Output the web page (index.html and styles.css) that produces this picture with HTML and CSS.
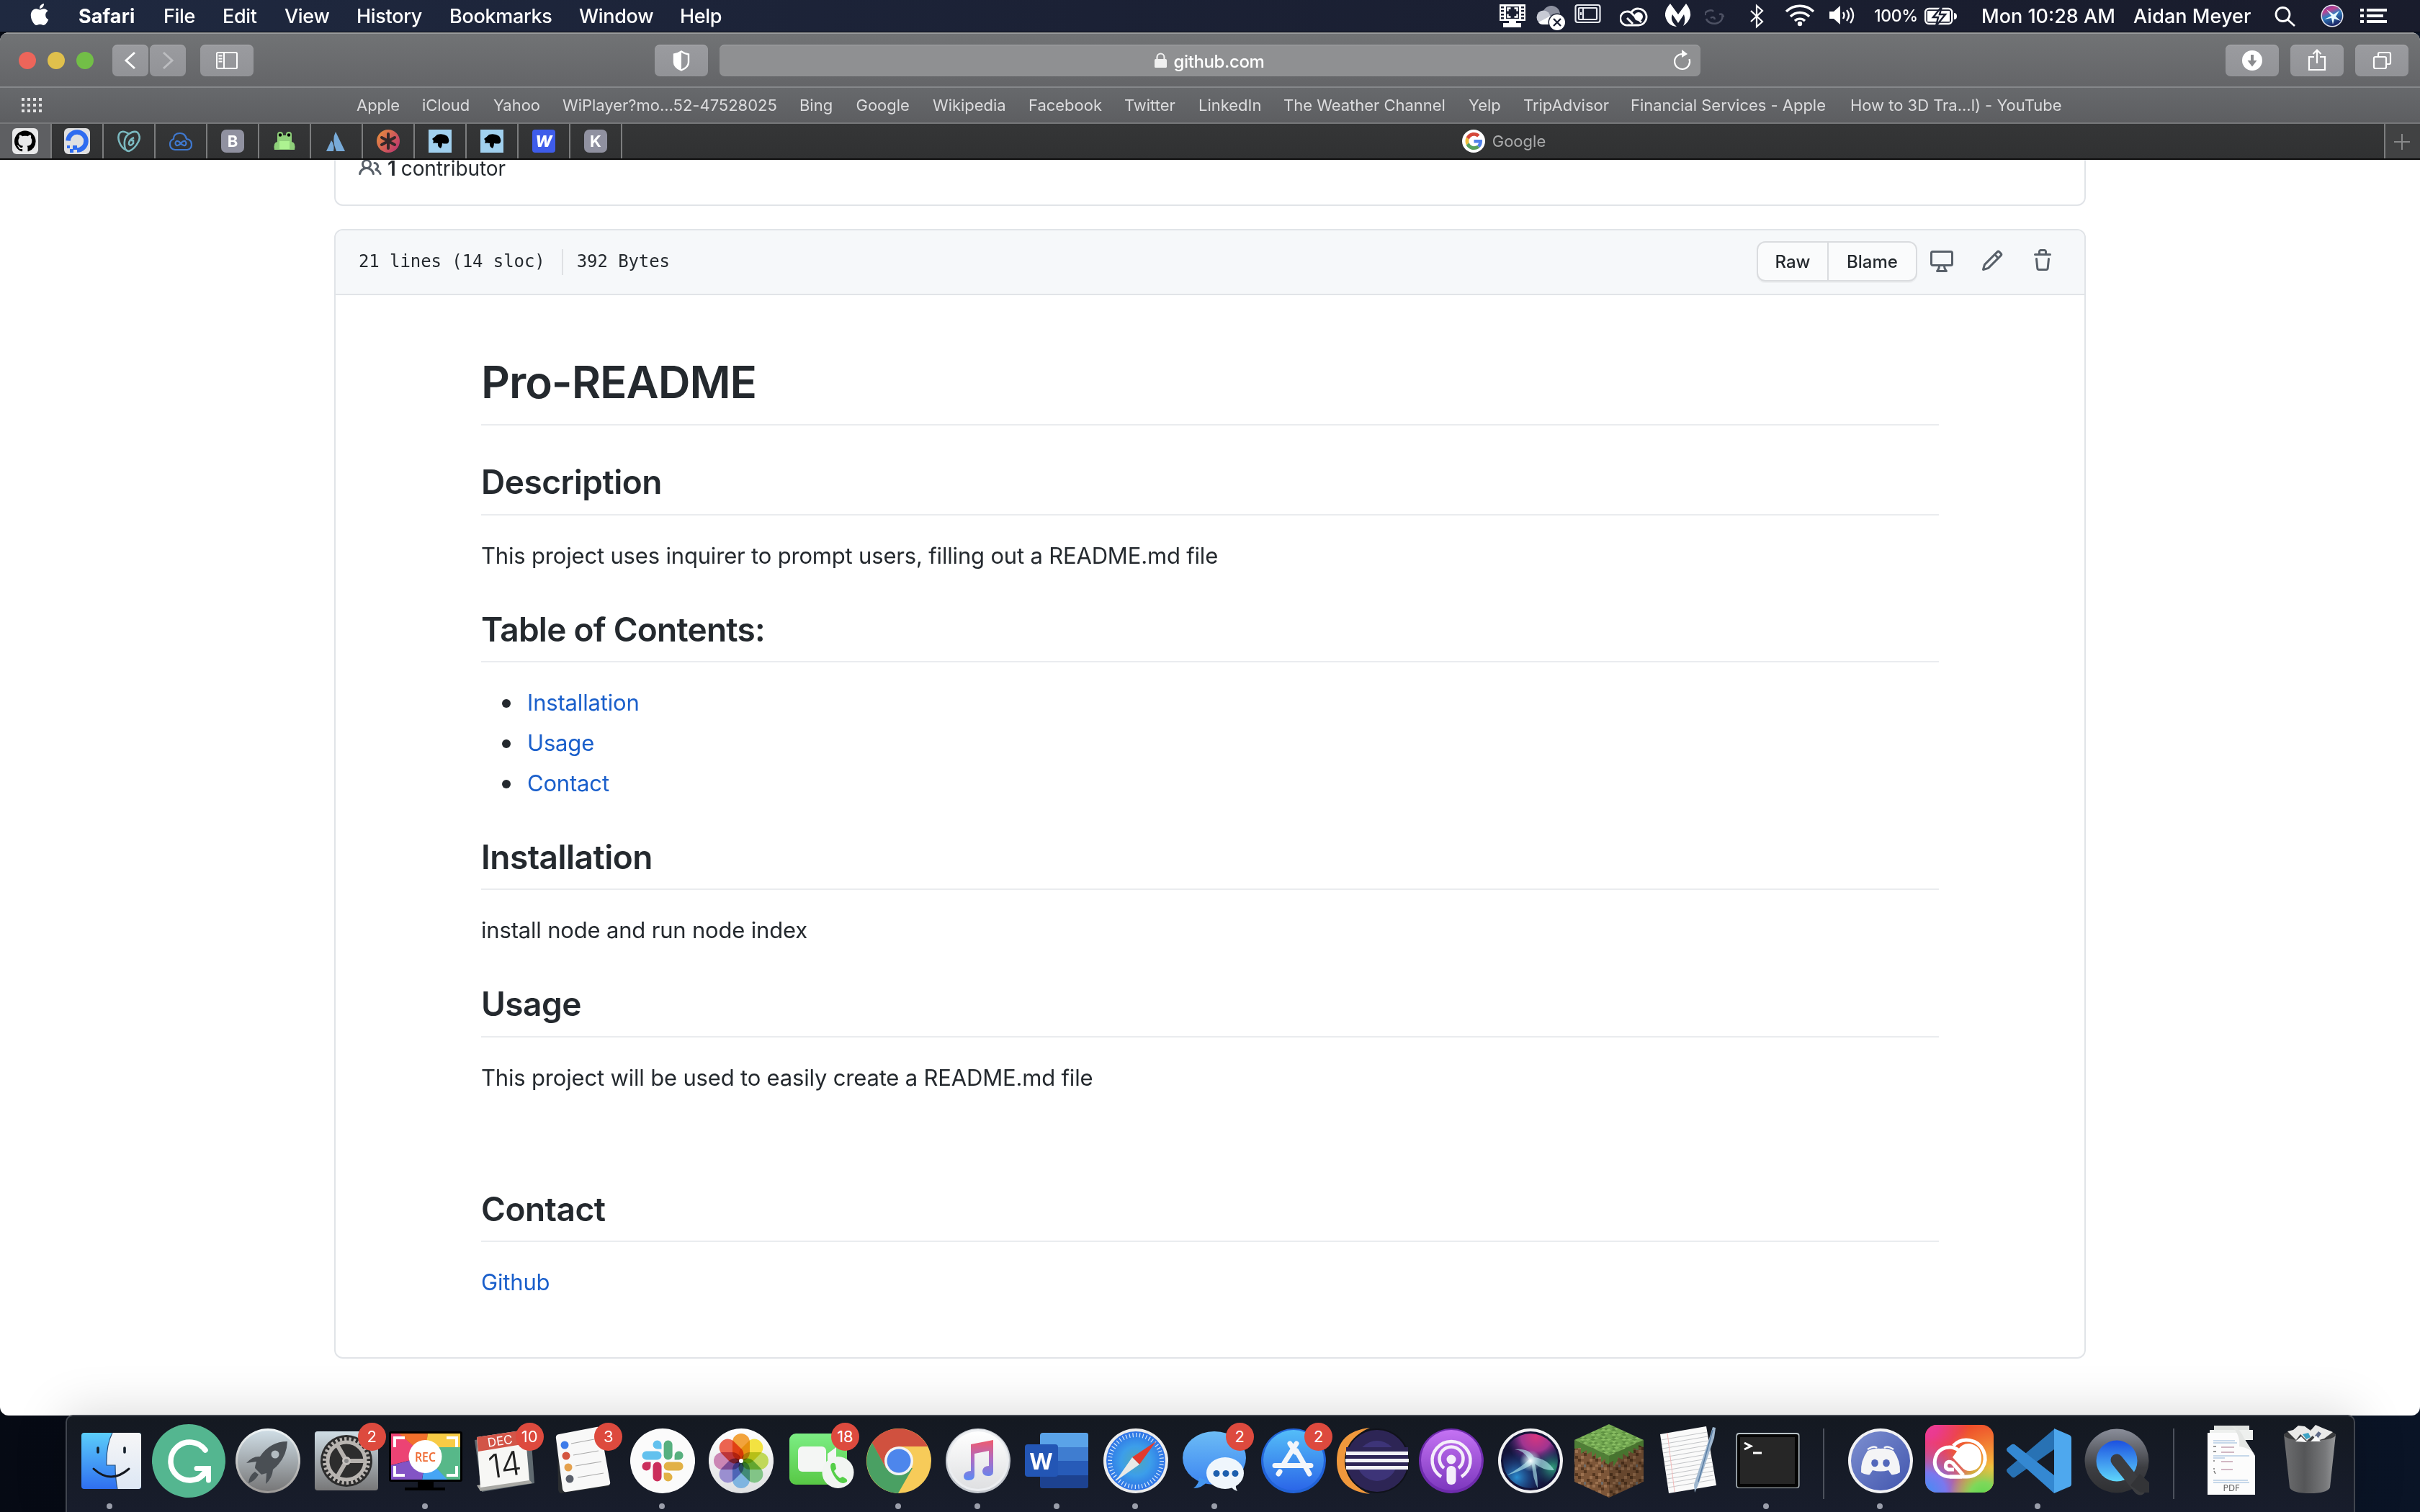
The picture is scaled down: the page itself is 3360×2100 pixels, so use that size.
FILE: index.html
```html
<!DOCTYPE html>
<html lang="en">
<head>
<meta charset="utf-8">
<title>Pro-README</title>
<link rel="stylesheet" href="styles.css">
</head>
<body>
<header class="menubar">
  <nav class="menus">
    <svg class="apple" width="30" height="30" viewBox="0 0 24 24" fill="#fff"><path d="M12.152 6.896c-.948 0-2.415-1.078-3.96-1.04-2.04.027-3.91 1.183-4.961 3.014-2.117 3.675-.546 9.103 1.519 12.09 1.013 1.454 2.208 3.09 3.792 3.039 1.52-.065 2.09-.987 3.935-.987 1.831 0 2.35.987 3.96.948 1.637-.026 2.676-1.48 3.676-2.948 1.156-1.688 1.636-3.325 1.662-3.415-.039-.013-3.182-1.221-3.22-4.857-.026-3.04 2.48-4.494 2.597-4.559-1.429-2.09-3.623-2.324-4.39-2.376-2-.156-3.675 1.09-4.61 1.09zM15.53 3.83c.843-1.012 1.4-2.427 1.245-3.83-1.207.052-2.662.805-3.532 1.818-.78.896-1.454 2.338-1.273 3.714 1.338.104 2.715-.688 3.559-1.701"/></svg>
    <b>Safari</b><span>File</span><span>Edit</span><span>View</span><span>History</span><span>Bookmarks</span><span>Window</span><span>Help</span>
  </nav>
  <div class="tray">
    <svg width="36" height="44" viewBox="0 0 36 44"><path fill="#fff" d="M0 6h36v23H23v3h7v6H5v-6h8v-3H0z"/><g fill="#1b2033"><path d="M9 9h18v17H9z"/><path d="M2 9h4v2.500H2zM2 14h4v2.500H2zM2 19h4v2.500H2zM2 24h4v2.500H2zM30 9h4v2.500h-4zM30 14h4v2.500h-4zM30 19h4v2.500h-4zM30 24h4v2.500h-4z"/></g><path d="M11.500 15.500v-4h4M20.500 11.500h4v4M24.500 19.500v4h-4M15.500 23.500h-4v-4" fill="none" stroke="#fff" stroke-width="2.400"/></svg>
    <svg width="42" height="44" viewBox="0 0 42 44"><circle cx="21" cy="20" r="12" fill="#8d91a0"/><circle cx="10" cy="24" r="9.500" fill="#c7cad4"/><path d="M3 31L20 22 28 34H9q-4 0-6-3z" fill="#fff"/><circle cx="29" cy="31" r="12.500" fill="#1b2033"/><circle cx="29" cy="31" r="11" fill="#fff"/><path d="M24 26l10 10M34 26L24 36" stroke="#1b2033" stroke-width="2.400"/></svg>
    <svg width="38" height="44" viewBox="0 0 38 44" fill="none" stroke="#e8eaf0" stroke-width="2.200"><rect x="1.500" y="7" width="34" height="24" rx="3"/><rect x="6" y="11" width="25" height="16" rx="1"/><path d="M12 11v16M9 17v4"/></svg>
    <svg width="40" height="44" viewBox="0 0 40 44" fill="none" stroke="#fff" stroke-width="2.800"><path d="M11 35h15a11.500 11.500 0 1 0-10-18"/><path d="M11 35a9.500 9.500 0 1 1 7-15l12 11"/><path d="M10 25l8 8"/><circle cx="26" cy="23" r="6" fill="#fff" stroke="none"/></svg>
    <svg width="36" height="44" viewBox="0 0 36 44"><path fill="#fff" d="M7 5l11 15L29 5q7 9 6 17-2 9-10 14 4-7 1-16l-8 12-8-12q-4 9 6 17-13-1-16-15Q-1 14 7 5z"/></svg>
    <svg width="30" height="44" viewBox="0 0 30 44" fill="none" stroke="#4d5163" stroke-width="2.500"><path d="M2 26a11 9 0 1 0 22-5M1 21q-2-4 4-6 5-2 7 1M8 25q5-3 6 2M20 20q5-2 6 4"/></svg>
    <svg width="20" height="44" viewBox="0 0 20 44" fill="none" stroke="#fff" stroke-width="2.200"><path d="M1 15l16 15-8 7V8l8 7L1 30"/></svg>
    <svg width="42" height="44" viewBox="0 0 42 44" fill="none" stroke="#fff" stroke-width="3.400"><path d="M2 16a27 27 0 0 1 38 0M8 23a18 18 0 0 1 26 0M14 29a10 10 0 0 1 14 0"/><circle cx="21" cy="33" r="1.500"/></svg>
    <svg width="36" height="44" viewBox="0 0 36 44" fill="none" stroke="#fff" stroke-width="2.400"><path fill="#fff" stroke="none" d="M0 16h6l9-8v26l-9-8H0z"/><path d="M19 17q3 4 0 9M24 14q6 7 0 15M29 11q8 10 0 21"/></svg>
    <span class="pct">100%</span>
    <svg width="48" height="44" viewBox="0 0 48 44"><rect x="1.200" y="12" width="37" height="21" rx="5" fill="none" stroke="#fff" stroke-width="2.400"/><path fill="#fff" d="M4 15h31v15H4zM41 18q4 0 4 4.500T41 27z"/><path d="M24 9L12 24h7l-3 12 13-16h-8z" fill="#fff" stroke="#1b2033" stroke-width="2.500"/></svg>
    <span class="clock">Mon 10:28 AM</span><span>Aidan Meyer</span>
    <svg width="30" height="44" viewBox="0 0 30 44" fill="none" stroke="#fff" stroke-width="2.800"><circle cx="11.500" cy="20" r="9.500"/><path d="M18 27l10 9"/></svg>
    <svg width="34" height="44" viewBox="0 0 34 44"><circle cx="16" cy="22" r="15.500" fill="#e9eaf2"/><circle cx="16" cy="22" r="14" fill="url(#siriA)"/><path d="M5 27l10-5-7-9 10 7 8-5-5 8 7 6-9-3-2 8-2-9z" fill="#e8fbff"/></svg>
    <svg width="38" height="44" viewBox="0 0 38 44" fill="#fff"><path d="M0 12h5v4H0zM9 12h28v4H9zM0 20h5v4H0zM9 20h23v4H9zM0 28h5v4H0zM9 28h28v4H9z"/></svg>
  </div>
</header>

<main class="window">
  <div class="toolbar">
    <div class="lights"><i class="red"></i><i class="yellow"></i><i class="green"></i></div>
    <div class="btn nav back"><svg width="50" height="44" viewBox="0 0 50 44" fill="none" stroke="#fff" stroke-width="3"><path d="M31 11L19 22l12 11"/></svg></div>
    <div class="btn nav"><svg width="50" height="44" viewBox="0 0 50 44" fill="none" stroke="#bcbdc0" stroke-width="3"><path d="M19 11l12 11-12 11"/></svg></div>
    <div class="btn side"><svg width="74" height="44" viewBox="0 0 74 44" fill="none" stroke="#fff" stroke-width="2"><rect x="23" y="11" width="28" height="22" rx="1.500"/><path d="M33 11v22M25.500 15.500h5M25.500 19.500h5M25.500 23.500h5"/></svg></div>
    <div class="btn shield"><svg width="74" height="44" viewBox="0 0 74 44"><path d="M37 9.500q5 3.500 10 4v11q0 7-10 11-10-4-10-11v-11q5-.5 10-4z" fill="none" stroke="#fff" stroke-width="2.400"/><path fill="#fff" d="M37 9.500q-5 3.500-10 4v11q0 7 10 11z"/></svg></div>
    <div class="url">
      <svg width="17" height="22" viewBox="0 0 17 22"><rect x="0" y="9" width="17" height="12" rx="1.500" fill="#f0f0f0"/><path d="M3.500 10V6.500a5 5 0 0 1 10 0V10" fill="none" stroke="#f0f0f0" stroke-width="2.200"/></svg>
      <span>github.com</span>
      <svg class="reload" width="26" height="30" viewBox="0 0 26 30"><path d="M22.500 13a10.500 10.500 0 1 1-9.500-7" fill="none" stroke="#fff" stroke-width="2.200"/><path d="M12 0l8 6-8 5z" fill="#fff"/></svg>
    </div>
    <div class="btn download"><svg width="74" height="44" viewBox="0 0 74 44"><circle cx="37" cy="22" r="14" fill="#fff"/><path d="M35 14h4v8h4.500L37 30.500 30.500 22H35z" fill="#8a8b8e"/></svg></div>
    <div class="btn"><svg width="74" height="44" viewBox="0 0 74 44" fill="none" stroke="#fff" stroke-width="2.200"><path d="M33 17h-7v18h22V17h-7M37 26V8M31.500 13L37 7.500l5.500 5.500"/></svg></div>
    <div class="btn"><svg width="74" height="44" viewBox="0 0 74 44" fill="none" stroke="#fff" stroke-width="2.200"><rect x="26" y="17" width="17" height="16" rx="2"/><path d="M32 16v-3q0-2 2-2h13q2 0 2 2v12q0 2-2 2h-3"/></svg></div>
  </div>

  <div class="favorites">
    <svg width="30" height="20" viewBox="0 0 30 20" fill="#e3e3e4"><path d="M0 0h4v4H0zM8 0h4v4H8zM16 0h4v4h-4zM24 0h4v4h-4zM0 8h4v4H0zM8 8h4v4H8zM16 8h4v4h-4zM24 8h4v4h-4zM0 16h4v4H0zM8 16h4v4H8zM16 16h4v4h-4zM24 16h4v4h-4z"/></svg>
    <span>Apple</span><span>iCloud</span><span>Yahoo</span><span>WiPlayer?mo...52-47528025</span><span>Bing</span><span>Google</span><span>Wikipedia</span><span>Facebook</span><span>Twitter</span><span>LinkedIn</span><span>The Weather Channel</span><span>Yelp</span><span>TripAdvisor</span><span>Financial Services - Apple</span><span>How to 3D Tra...l) - YouTube</span>
  </div>

  <div class="tabs">
    <div class="pin active"><svg width="36" height="36" viewBox="0 0 36 36"><rect width="36" height="36" rx="6" fill="#e9e9ea"/><path transform="translate(3 3.500) scale(1.850)" d="M8 0C3.580 0 0 3.580 0 8c0 3.540 2.290 6.530 5.470 7.590.4.070.55-.17.55-.38 0-.19-.01-.82-.01-1.490-2.010.37-2.530-.49-2.690-.94-.09-.23-.48-.94-.82-1.130-.28-.15-.68-.52-.01-.53.63-.01 1.080.58 1.230.82.72 1.210 1.870.87 2.330.66.07-.52.28-.87.51-1.070-1.780-.2-3.640-.89-3.640-3.950 0-.87.31-1.590.82-2.150-.08-.2-.36-1.020.08-2.120 0 0 .67-.21 2.200.82.64-.18 1.320-.27 2-.27.68 0 1.360.09 2 .27 1.530-1.040 2.200-.82 2.200-.82.44 1.100.16 1.920.08 2.120.51.56.82 1.270.82 2.150 0 3.070-1.870 3.750-3.650 3.950.29.25.54.73.54 1.480 0 1.070-.01 1.930-.01 2.200 0 .21.15.46.55.38A8.013 8.013 0 0016 8c0-4.420-3.580-8-8-8z"/></svg></div>
    <div class="pin"><svg width="36" height="36" viewBox="0 0 36 36"><rect width="36" height="36" rx="6" fill="#e0e0e1"/><path d="M5.500 17.500A12.500 12.500 0 1 1 18 30.500" fill="none" stroke="#2f6cf0" stroke-width="6.500"/><path d="M12 24h6v6h-6zM8 29h5v5H8zM4 24h4v4H4z" fill="#2f6cf0"/></svg></div>
    <div class="pin"><svg width="32" height="32" viewBox="0 0 32 32" fill="none" stroke="#7bb9c0" stroke-width="2.600"><path d="M11 28C3 23-1 11 3 5q4-5 13 1"/><path d="M11 27Q7 12 16 6q7-5 12-2 5 6 1 13-5 10-13 13-3 0-5-3z"/><path d="M23 11q-7 3-7 9 2 4 6-1v-4h-3"/></svg></div>
    <div class="pin"><svg width="32" height="32" viewBox="0 0 32 32" fill="none" stroke="#3f78cf" stroke-width="2.200"><path d="M8 28q-7-1-7-8 0-5 5-7 0-8 9-8 7 0 9 8 7 1 7 8 0 6-6 7z"/><path d="M16 19q-3-4-6-3-3 3 0 6 3 1 6-3t6-3q3 3 0 6-3 1-6-3z"/></svg></div>
    <div class="pin"><span class="letter">B</span></div>
    <div class="pin"><svg width="32" height="32" viewBox="0 0 32 32"><g fill="#8fd07a"><circle cx="10" cy="7" r="4"/><circle cx="22" cy="7" r="4"/><path d="M6 8h20v9q6 1 4 11H2Q0 18 6 17z"/></g><path fill="#adf291" d="M9 16h14v11H9z"/><circle cx="10" cy="7.500" r="2.200"/><circle cx="22" cy="7.500" r="2.200"/></svg></div>
    <div class="pin"><svg width="32" height="32" viewBox="0 0 32 32" fill="#78abd9"><path d="M15 3q-6 11 1 27h12z"/><path d="M9 15L2 30h10q2-9-3-15z"/></svg></div>
    <div class="pin"><svg width="32" height="32" viewBox="0 0 32 32"><circle cx="16" cy="16" r="16" fill="url(#fav)"/><path d="M16 6v20M7 11l18 10M25 11L7 21" stroke="#33292a" stroke-width="4" stroke-linecap="round"/></svg></div>
    <div class="pin"><svg width="32" height="32" viewBox="0 0 32 32"><path fill="#a1d0ee" d="M0 0h32v32H0z"/><path d="M5 13q4-3 7-6 8-2 14 2 4 6 1 10-3 1-8 0 0 4-2 7-5-2-4-7-4-1-7 0 2-4-1-6z"/></svg></div>
    <div class="pin"><svg width="32" height="32" viewBox="0 0 32 32"><path fill="#a1d0ee" d="M0 0h32v32H0z"/><path d="M5 13q4-3 7-6 8-2 14 2 4 6 1 10-3 1-8 0 0 4-2 7-5-2-4-7-4-1-7 0 2-4-1-6z"/></svg></div>
    <div class="pin"><span class="letter w">W</span></div>
    <div class="pin"><span class="letter">K</span></div>
    <div class="tab">
      <svg width="32" height="32" viewBox="0 0 32 32"><circle cx="16" cy="16" r="16" fill="#fff"/><g transform="translate(4.500 4) scale(.5)"><path fill="#d5483a" d="M24 9.500c3.540 0 6.710 1.220 9.210 3.600l6.850-6.850C35.900 2.380 30.470 0 24 0 14.620 0 6.510 5.380 2.560 13.220l7.980 6.190C12.430 13.720 17.740 9.500 24 9.500z"/><path fill="#4f82ea" d="M46.980 24.550c0-1.570-.15-3.090-.38-4.550H24v9.020h12.940c-.58 2.960-2.260 5.480-4.780 7.180l7.730 6c4.510-4.180 7.090-10.360 7.090-17.650z"/><path fill="#eebb3c" d="M10.530 28.590c-.48-1.450-.76-2.990-.76-4.590s.27-3.140.76-4.590l-7.980-6.190C.92 16.460 0 20.120 0 24c0 3.880.92 7.540 2.560 10.780l7.970-6.190z"/><path fill="#57a15c" d="M24 48c6.480 0 11.930-2.130 15.890-5.810l-7.730-6c-2.150 1.450-4.920 2.300-8.160 2.300-6.260 0-11.570-4.220-13.470-9.910l-7.980 6.190C6.510 42.620 14.620 48 24 48z"/></g></svg>
      <span>Google</span>
    </div>
    <div class="newtab"><svg width="48" height="48" viewBox="0 0 48 48" stroke="#88898a" stroke-width="2"><path d="M12 25h22M23 14v22"/></svg></div>
  </div>

  <div class="page">
    <section class="box contributors">
      <svg width="32" height="32" viewBox="0 0 16 16" fill="#586069"><path d="M5.500 3.500a2 2 0 100 4 2 2 0 000-4zM2 5.500a3.500 3.500 0 115.898 2.549 5.507 5.507 0 013.034 4.084.75.75 0 11-1.482.235 4.001 4.001 0 00-7.900 0 .75.75 0 01-1.482-.236A5.507 5.507 0 013.102 8.050 3.490 3.490 0 012 5.500zM11 4a.75.75 0 100 1.500 1.500 1.500 0 01.666 2.844.75.75 0 00-.416.672v.352a.75.75 0 00.574.73c1.200.289 2.162 1.200 2.522 2.372a.75.75 0 101.434-.44 5.010 5.010 0 00-2.560-3.012A3 3 0 0011 4z"/></svg>
      <b>1</b><span>contributor</span>
    </section>
    <section class="box file">
      <div class="filehead">
        <span class="mono">21 lines (14 sloc)</span><i class="rule"></i><span class="mono">392 Bytes</span>
        <div class="group"><a class="raw">Raw</a><a class="blame">Blame</a></div>
        <div class="acts">
          <svg width="32" height="32" viewBox="0 0 16 16"><path fill-rule="evenodd" d="M1.750 2.500h12.500a.25.25 0 01.25.25v7.500a.25.25 0 01-.25.25H1.750a.25.25 0 01-.25-.25v-7.500a.25.25 0 01.25-.25zM14.250 1H1.750A1.750 1.750 0 000 2.750v7.500C0 11.216.784 12 1.750 12h3.727c-.1 1.041-.52 1.872-1.292 2.757A.75.75 0 004.750 16h6.500a.75.75 0 00.565-1.243c-.772-.885-1.193-1.716-1.292-2.757h3.727A1.750 1.750 0 0016 10.250v-7.500A1.750 1.750 0 0014.250 1zM9.018 12H6.982a5.720 5.720 0 01-.765 2.500h3.566a5.720 5.720 0 01-.765-2.500z"/></svg>
          <svg width="32" height="32" viewBox="0 0 16 16"><path fill-rule="evenodd" d="M11.013 1.427a1.750 1.750 0 012.474 0l1.086 1.086a1.750 1.750 0 010 2.474l-8.610 8.610c-.21.21-.47.364-.756.445l-3.251.93a.75.75 0 01-.927-.928l.929-3.250a1.750 1.750 0 01.445-.758l8.610-8.610zm1.414 1.060a.25.25 0 00-.354 0L10.811 3.750l1.439 1.440 1.263-1.263a.25.25 0 000-.354l-1.086-1.086zM11.189 6.250L9.750 4.810l-6.286 6.287a.25.25 0 00-.064.108l-.558 1.953 1.953-.558a.249.249 0 00.108-.064l6.286-6.286z"/></svg>
          <svg width="32" height="32" viewBox="0 0 16 16"><path fill-rule="evenodd" d="M6.500 1.750a.25.25 0 01.25-.25h2.500a.25.25 0 01.25.25V3h-3V1.750zm4.500 0V3h2.250a.75.75 0 010 1.500H2.750a.75.75 0 010-1.500H5V1.750C5 .784 5.784 0 6.750 0h2.500C10.216 0 11 .784 11 1.750zM4.496 6.675a.75.75 0 10-1.492.15l.66 6.600A1.750 1.750 0 005.405 15h5.190c.9 0 1.652-.681 1.741-1.576l.66-6.600a.75.75 0 00-1.492-.149l-.66 6.600a.25.25 0 01-.249.225h-5.190a.25.25 0 01-.249-.225l-.66-6.600z"/></svg>
        </div>
      </div>
      <article class="markdown">
        <h1>Pro-README</h1>
        <h2>Description</h2>
        <p>This project uses inquirer to prompt users, filling out a README.md file</p>
        <h2 class="long">Table of Contents:</h2>
        <ul><li><a>Installation</a></li><li><a>Usage</a></li><li><a>Contact</a></li></ul>
        <h2>Installation</h2>
        <p>install node and run node index</p>
        <h2>Usage</h2>
        <p>This project will be used to easily create a README.md file</p>
        <p><br></p>
        <h2>Contact</h2>
        <p><a>Github</a></p>
      </article>
    </section>
  </div>
</main>

<footer class="dock">
  <div class="app run"><svg viewBox="0 0 102 102"><rect x="11" y="12" width="83" height="78" rx="4" fill="url(#finL)"/><path d="M54 12H90q4 0 4 4v70q0 4-4 4H61q-3-15-3-33H46Q45 30 54 12z" fill="url(#finR)"/><path d="M54 12Q45 30 46 57H58q0 18 3 33" fill="none" stroke="#27507f" stroke-width="1.200"/><path d="M34 33v6M71 33v6" stroke="#14202b" stroke-width="3.600" stroke-linecap="round"/><path d="M28 62q24 22 49 0" fill="none" stroke="#14181f" stroke-width="3" stroke-linecap="round"/></svg></div>
  <div class="app"><svg viewBox="0 0 102 102"><circle cx="51" cy="51" r="51" fill="#54b690"/><path d="M74 36A26.500 26.500 0 1 0 74 67" fill="none" stroke="#fff" stroke-width="7.500" stroke-linecap="round"/><path d="M62 61.500H78.500V78M77 63L64 76" fill="none" stroke="#fff" stroke-width="7" stroke-linecap="round"/></svg></div>
  <div class="app"><svg viewBox="0 0 102 102"><circle cx="51" cy="51" r="45" fill="url(#rimG)"/><circle cx="51" cy="51" r="42" fill="url(#silver)"/><path d="M78 24Q54 24 40 45q-10-1-19 9l14-2q-2 6-2 9l9 9 7-2-1 15q9-8 10-20Q77 48 78 24z" fill="#4a4f54"/><path d="M33 66q-8 5-9 16 9-3 14-12z" fill="#4a4f54"/><circle cx="61" cy="42" r="5.500" fill="#b3bcc1"/></svg></div>
  <div class="app"><svg viewBox="0 0 102 102"><rect x="7" y="10" width="88" height="82" rx="4" fill="url(#silver)"/><circle cx="51" cy="51" r="36" fill="#2d2d2d"/><circle cx="51" cy="51" r="30.500" fill="none" stroke="#b9b5b1" stroke-width="5" stroke-dasharray="3.200 3.190"/><circle cx="51" cy="51" r="26" fill="none" stroke="#b9b5b1" stroke-width="5"/><path d="M51 51h26M51 51L38 28.500M51 51L38 73.500" stroke="#b5b1ad" stroke-width="6"/><circle cx="51" cy="51" r="6" fill="#c5c1bd"/><circle cx="51" cy="51" r="3" fill="#888"/></svg><em>2</em></div>
  <div class="app run"><svg viewBox="0 0 102 102"><rect y="10" x="0" width="102" height="70" rx="3"/><path d="M40 78h22v10h16v4H22v-4h18z"/><g><path fill="#ec4374" d="M3 13h12l36 32L3 57z"/><path fill="#f1702c" d="M14 13h40l-3 32z"/><path fill="#f7cb45" d="M54 13h45v19H51z"/><path fill="#57b889" d="M51 32h48v45H80L51 45z"/><path fill="#46a5f5" d="M51 45l30 32H46z"/><path fill="#8354c5" d="M3 57l48-12-5 32H3z"/></g><path d="M8 32V19h14M80 19h14v13M94 58v13H80M22 71H8V58" fill="none" stroke="#fff" stroke-width="4"/><circle cx="50.500" cy="45" r="23" fill="#fff"/><text x="50.500" y="52" text-anchor="middle" font-family="Open Sans,sans-serif" font-weight="600" font-size="18" textLength="29" lengthAdjust="spacingAndGlyphs" fill="#ef6a32">REC</text></svg></div>
  <div class="app"><svg viewBox="0 0 102 102"><path d="M9 22l78-10 5 70-73 12z" fill="#606a70"/><path d="M12 85l71-10 6 7-72 11z" fill="#a8a8a4"/><path d="M12 18l67-10 6 70-68 10z" fill="#f7f7f5"/><path d="M12 18l67-10 2 19-67 11z" fill="#d25548"/><g font-family="Inter,sans-serif" text-anchor="middle" transform="rotate(-8 48 50)"><text x="48" y="29" font-size="17" font-weight="400" fill="#fff">DEC</text><text x="50" y="73" font-size="46" font-weight="300" fill="#222" textLength="46">14</text></g></svg><em>10</em></div>
  <div class="app"><svg viewBox="0 0 102 102"><path d="M15 20L73 8l14 78-67 10q-3 0-4-5z" fill="#2b2e31"/><path d="M17 14l52-10q5-1 6 4l13 72q1 4-3 5l-57 9q-5 1-6-4L13 20q-1-5 4-6z" fill="#f8f8f8"/><path d="M34 27l32-6M37 43l35-6M40 58l36-6M43 74l36-6" stroke="#aaa" stroke-width="1.200"/><circle cx="25" cy="29" r="5.500" fill="#3e7be9"/><circle cx="27" cy="44" r="5.500" fill="#d4553f"/><circle cx="30" cy="60" r="5.500" fill="#e4a04d"/><circle cx="32" cy="76" r="5.500" fill="#5a5f6b"/></svg><em>3</em></div>
  <div class="app run"><svg viewBox="0 0 102 102"><circle cx="51" cy="51" r="45" fill="#fbfbfb"/><g transform="translate(22.500 22.500) scale(2.380)"><path fill="#cb2f5c" d="M5.042 15.165a2.528 2.528 0 0 1-2.520 2.523A2.528 2.528 0 0 1 0 15.165a2.527 2.527 0 0 1 2.522-2.520h2.520v2.520zM6.313 15.165a2.527 2.527 0 0 1 2.521-2.520 2.527 2.527 0 0 1 2.521 2.520v6.313A2.528 2.528 0 0 1 8.834 24a2.528 2.528 0 0 1-2.521-2.522v-6.313z"/><path fill="#62c1ee" d="M8.834 5.042a2.528 2.528 0 0 1-2.521-2.520A2.528 2.528 0 0 1 8.834 0a2.528 2.528 0 0 1 2.521 2.522v2.520H8.834zM8.834 6.313a2.528 2.528 0 0 1 2.521 2.521 2.528 2.528 0 0 1-2.521 2.521H2.522A2.528 2.528 0 0 1 0 8.834a2.528 2.528 0 0 1 2.522-2.521h6.312z"/><path fill="#57b07f" d="M18.956 8.834a2.528 2.528 0 0 1 2.522-2.521A2.528 2.528 0 0 1 24 8.834a2.528 2.528 0 0 1-2.522 2.521h-2.522V8.834zM17.688 8.834a2.528 2.528 0 0 1-2.523 2.521 2.527 2.527 0 0 1-2.520-2.521V2.522A2.527 2.527 0 0 1 15.165 0a2.528 2.528 0 0 1 2.523 2.522v6.312z"/><path fill="#e2b146" d="M15.165 18.956a2.528 2.528 0 0 1 2.523 2.522A2.528 2.528 0 0 1 15.165 24a2.527 2.527 0 0 1-2.520-2.522v-2.522h2.520zM15.165 17.688a2.527 2.527 0 0 1-2.520-2.523 2.526 2.526 0 0 1 2.520-2.520h6.313A2.527 2.527 0 0 1 24 15.165a2.528 2.528 0 0 1-2.522 2.523h-6.313z"/></g></svg></div>
  <div class="app"><svg viewBox="0 0 102 102"><circle cx="51" cy="51" r="45" fill="url(#white)"/><g class="petals"><rect x="39" y="13" width="24" height="38" rx="12" fill="#f2a33c"/><rect x="39" y="13" width="24" height="38" rx="12" fill="#f3e241" transform="rotate(45 51 51)"/><rect x="39" y="13" width="24" height="38" rx="12" fill="#c0d85a" transform="rotate(90 51 51)"/><rect x="39" y="13" width="24" height="38" rx="12" fill="#82c487" transform="rotate(135 51 51)"/><rect x="39" y="13" width="24" height="38" rx="12" fill="#7fb4e0" transform="rotate(180 51 51)"/><rect x="39" y="13" width="24" height="38" rx="12" fill="#9a8fd0" transform="rotate(225 51 51)"/><rect x="39" y="13" width="24" height="38" rx="12" fill="#cb86b4" transform="rotate(270 51 51)"/><rect x="39" y="13" width="24" height="38" rx="12" fill="#ec6450" transform="rotate(315 51 51)"/></g><circle cx="51" cy="51" r="3" fill="#fff"/></svg></div>
  <div class="app"><svg viewBox="0 0 102 102"><rect x="8" y="13" width="80" height="71" rx="9" fill="url(#ftG)"/><rect x="20" y="31" width="39" height="35" rx="6" fill="#f4f6f4"/><path d="M61 41l12-9v24H61z" fill="#f4f6f4"/><circle cx="75.500" cy="67" r="22" fill="#f2f5f2"/><path d="M66 55q4-3 6 1l1 6-3 3q3 6 8 10l4-2 5 3q3 3-1 5-8 4-16-9-7-12-4-17z" fill="#55cf48"/></svg><em>18</em></div>
  <div class="app run"><svg viewBox="0 0 102 102"><circle cx="51" cy="51" r="45" fill="#f7cb59"/><path d="M51 31h40A45 45 0 0 0 13.500 26L33 61z" fill="#d0513f"/><path d="M14 26A45 45 0 0 0 50 96L70 61 51 60 33 61z" fill="#4aa063"/><circle cx="51" cy="51" r="20" fill="#f3f3f3"/><circle cx="51" cy="51" r="16.500" fill="#4d86ec"/></svg></div>
  <div class="app run"><svg viewBox="0 0 102 102"><circle cx="51" cy="51" r="45" fill="#c5c9cf"/><circle cx="51" cy="50" r="43" fill="#eceef1"/><circle cx="51" cy="50" r="40" fill="url(#white)"/><path d="M41 28l31-6v44q0 6-7 6-8 0-8-7 1-7 9-7V37l-20 4v30q0 7-8 7-7 0-7-6 1-7 10-7z" fill="url(#music)"/></svg></div>
  <div class="app run"><svg viewBox="0 0 102 102"><path fill="#5aa3e8" d="M32 12h60q3 0 3 3v17H28V16q0-4 4-4z"/><path fill="#3f7dd0" d="M28 32h67v19H28z"/><path fill="#275bb8" d="M28 51h67v20H28z"/><path fill="#1d4290" d="M28 71h67v15q0 3-3 3H31q-3 0-3-3z"/><rect x="7" y="28" width="46" height="45" rx="4" fill="#2356b5"/><text x="29.500" y="63" text-anchor="middle" font-family="Open Sans,sans-serif" font-weight="700" font-size="33" fill="#fff" textLength="31" lengthAdjust="spacingAndGlyphs">W</text></svg></div>
  <div class="app run"><svg viewBox="0 0 102 102"><circle cx="51" cy="51" r="45" fill="#ececec"/><circle cx="51" cy="51" r="41" fill="url(#safari)"/><circle cx="51" cy="51" r="36" fill="none" stroke="#dcebfa" stroke-width="6" stroke-dasharray="1.200 3.510"/><path d="M79 24L56 56 46 46z" fill="#e23a2e"/><path d="M23 79l33-23-10-10z" fill="#e9e9e6"/></svg></div>
  <div class="app run"><svg viewBox="0 0 102 102"><ellipse cx="51" cy="47" rx="44" ry="37" fill="url(#msg)"/><path d="M30 74q0 9-8 15 12 0 20-10z" fill="#4596f0"/><ellipse cx="66" cy="68" rx="26" ry="22" fill="#eff6fc"/><path d="M74 86q2 5 9 7-3-5-2-11z" fill="#eff6fc"/><g fill="#1d5fae"><circle cx="54" cy="68.500" r="4.500"/><circle cx="67" cy="68.500" r="4.500"/><circle cx="80" cy="68.500" r="4.500"/></g></svg><em>2</em></div>
  <div class="app"><svg viewBox="0 0 102 102"><circle cx="51" cy="51" r="45" fill="#2263d8"/><circle cx="51" cy="50" r="42" fill="url(#store)"/><g stroke="#f3f6fa" stroke-width="7" stroke-linecap="round"><path d="M25 57.500h50M55 27L38 54M46 27l8 12M55 37l18 32M32 66l-2 3"/></g></svg><em>2</em></div>
  <div class="app"><svg viewBox="0 0 102 102"><path d="M47 5Q1 10 1 51t46 46Q16 85 16 51T47 5z" fill="#f0983c"/><circle cx="57" cy="51" r="45" fill="#10121a"/><circle cx="57" cy="51" r="43" fill="#2d2555"/><circle cx="57" cy="51" r="28" fill="#3d3478"/><path d="M14 32h86v30H14z" fill="#2d2555"/><path d="M14 38h86v5H14zM13 48h88v5H13zM14 58h86v5H14z" fill="#f2f2f6"/></svg></div>
  <div class="app"><svg viewBox="0 0 102 102"><circle cx="51" cy="51" r="45" fill="#6f2cae"/><circle cx="51" cy="50" r="42" fill="url(#pod)"/><g fill="none" stroke="#f4eefa" stroke-width="4.500"><path d="M37 73A26.500 26.500 0 1 1 65 73"/><path d="M41 61A16.500 16.500 0 1 1 61 61"/></g><circle cx="51" cy="49" r="6.500" fill="#f4eefa"/><rect x="44.500" y="58" width="13" height="26" rx="6" fill="#f4eefa"/></svg></div>
  <div class="app"><svg viewBox="0 0 102 102"><circle cx="51" cy="51" r="45" fill="#f0f0f2"/><circle cx="51" cy="51" r="41" fill="#131338"/><circle cx="51" cy="51" r="38" fill="url(#s1)"/><circle cx="51" cy="51" r="38" fill="url(#s2)"/><circle cx="51" cy="51" r="38" fill="url(#s3)"/><path d="M18 71Q38 60 49 49q-8-13-20-14 20-2 27 11 18 2 28 18-14 1-27-9 4 14 4 34-7-14-8-33-14 9-35 15z" fill="#b9f2f5" opacity=".6"/><circle cx="51" cy="51" r="15" fill="url(#glow)"/></svg></div>
  <div class="app"><svg viewBox="0 0 102 102"><path d="M3 22l48 22v58L3 80z" fill="url(#dirt)"/><path d="M99 22L51 44v58l48-22z" fill="url(#dirt)"/><path d="M99 22L51 44v58l48-22z" fill="#000" opacity=".18"/><path d="M3 22l48 22v12l-5-2v-6l-6 5v-8l-7 3v-8l-6 6v-8l-7 4v-6l-8 5v-8l-9 1z" fill="#4f7f36"/><path d="M99 22L51 44v10l6-3v8l6-9v-4l7 3v-8l8 5v-9l7 4v-8l7 3v-7l7 3z" fill="#47742f"/><path d="M51 0l48 22-48 22L3 22z" fill="url(#grass)"/></svg></div>
  <div class="app"><svg viewBox="0 0 102 102"><path d="M12 14l64-11 14 82-66 11z" fill="#fafafa"/><path d="M13 22l64-11M14 28l64-11M15 34l64-11M16 40l64-11M17 46l64-11M18 52l64-11M19 58l64-11M20 64l64-11M21 70l64-11M22 76l64-11M22 82l64-11M23 88l64-11" stroke="#c3c5c8" stroke-width="1"/><path d="M22 12l10 82" stroke="#f3b9b9"/><path d="M85 4l4 1-2 14L65 84l-5 11-1-11L80 20z" fill="#9fb7cf"/><path d="M85 8L65 80" stroke="#5a7da3" stroke-width="1.500"/></svg></div>
  <div class="app run"><svg viewBox="0 0 102 102"><rect x="8.500" y="12" width="88" height="77" rx="4" fill="#b9c3c8"/><rect x="10" y="14" width="85" height="74" rx="3" fill="#050505"/><path d="M14 18h76v65H14z" fill="#262626"/><path d="M20 26l9 4.500-9 4.500M32 40h12" fill="none" stroke="#fff" stroke-width="3"/></svg></div>
  <div class="sep"></div>
  <div class="app run"><svg viewBox="0 0 102 102"><circle cx="51" cy="51" r="45" fill="#f2f2f4"/><circle cx="51" cy="51" r="41" fill="url(#disc)"/><path d="M33 37q9-4 18-3 9-1 18 3 10 14 9 30-6 4-12 3l-4-6q-11 3-22 0l-4 6q-6 1-12-3-1-16 9-30z" fill="#f4f4f6"/><path d="M33 35q9-6 13-2M69 35q-9-6-13-2" stroke="#f4f4f6" stroke-width="2.500" fill="none"/><ellipse cx="43" cy="54" rx="4.800" ry="5.300" fill="#5367bb"/><ellipse cx="59" cy="54" rx="4.800" ry="5.300" fill="#5367bb"/></svg></div>
  <div class="app"><svg viewBox="0 0 102 102"><rect x="4" y="1" width="95" height="94" rx="16" fill="#ee4a2a"/><rect x="4" y="1" width="95" height="94" rx="16" fill="url(#cc1)"/><rect x="4" y="1" width="95" height="94" rx="16" fill="url(#cc2)"/><rect x="4" y="1" width="95" height="94" rx="16" fill="url(#cc3)"/><rect x="4" y="1" width="95" height="94" rx="16" fill="url(#cc4)"/><path d="M50 35q6-9 16-8 16 3 16 20t-16 18q-7 0-11-5L42 46z" fill="#fff"/><g fill="none" stroke="#fff" stroke-width="5"><path d="M38 73H62A25.500 25.500 0 1 0 43 30"/><path d="M55 73H38A20.500 20.500 0 1 1 50 36"/><path d="M57 71L42 54q-6-4-9 1-2 6 3 8h8" stroke-width="5"/></g></svg></div>
  <div class="app run"><svg viewBox="0 0 102 102"><path d="M73 7v28L18 74q-3 1-5-2l-5-5q-2-3 0-5z" fill="#2872b4"/><path d="M18 28l55 43v25L8 38q-2-3 0-5l5-4q2-2 5-1z" fill="#3488d2"/><path d="M73 6l21 9q3 1 3 5v63q0 3-3 4l-21 9z" fill="#4ea8ee"/></svg></div>
  <div class="app"><svg viewBox="0 0 102 102"><circle cx="51" cy="51" r="44.500" fill="url(#qt)"/><circle cx="51" cy="51" r="28.500" fill="url(#qtb)"/><path d="M51 50L83 90" stroke="#3c3d40" stroke-width="17" stroke-linecap="round"/><path d="M83 69l13 12v14H84L70 85z" fill="#333437"/></svg></div>
  <div class="sep two"></div>
  <div class="app"><svg viewBox="0 0 102 102"><path d="M28 2h49v12H28z" fill="#dfe2e0"/><path d="M22 8h60v14H22z" fill="#eef0ee"/><path d="M19 12h46l20 32v54H19z" fill="#fcfcfc"/><path d="M52 2q10 2 16 14t17 27q-8-11-22-12 2-16-11-29z" fill="#e4e6e4"/><g stroke-width="1.500" fill="none"><path d="M27 23h30M27 26h33M27 44h50M27 47h16M27 78h48M27 81h50" stroke="#b5cbe4"/><path d="M38 32h18M38 39h18M38 52h16M38 63h16" stroke="#c2a0b0"/><path d="M27 31h4M27 38h4M27 51h2M27 62h2M28 65l2 4" stroke="#777"/></g><text x="52" y="93" text-anchor="middle" font-family="Open Sans,sans-serif" font-size="12.500" fill="#555">PDF</text></svg></div>
  <div class="app"><svg viewBox="0 0 102 102"><path d="M15 14q36-12 72 0l-8 74q-4 8-28 8t-28-8z" fill="url(#bin)"/><ellipse cx="51" cy="15" rx="36" ry="8" fill="#3b3c3e"/><path d="M20 10l12 12 6-8 9 9 8-7 6 7 10-3 12-9-15-6-9-4-7 8-8-6-9-1-7 6z" fill="#e9e9e8"/><path d="M41 14l8-2 3 6-6 3z" fill="#3da2c4"/><path d="M63 10l4 3-5 7-4-4z" fill="#5f6a88"/><path d="M31 24l8-7 8 8zM52 24l8-8 6 8z" fill="#fafafa"/></svg></div>
</footer>

<svg class="defs" width="0" height="0" aria-hidden="true"><defs>
  <linearGradient id="finL" x2="0" y2="1"><stop stop-color="#5bcdfa"/><stop offset="1" stop-color="#2f6ff0"/></linearGradient>
  <linearGradient id="finR" x2="0" y2="1"><stop stop-color="#f6f6f7"/><stop offset="1" stop-color="#dde7f4"/></linearGradient>
  <linearGradient id="silver" x2="0" y2="1"><stop stop-color="#cfdde5"/><stop offset="1" stop-color="#777778"/></linearGradient>
  <linearGradient id="rimG" x2="0" y2="1"><stop stop-color="#f0f6f8"/><stop offset="1" stop-color="#9b9896"/></linearGradient>
  <linearGradient id="white" x2="0" y2="1"><stop stop-color="#fff"/><stop offset="1" stop-color="#dfe0e2"/></linearGradient>
  <linearGradient id="ftG" x2="0" y2="1"><stop stop-color="#7cee84"/><stop offset="1" stop-color="#58c845"/></linearGradient>
  <linearGradient id="music" x2="0" y2="1"><stop stop-color="#ef5b6c"/><stop offset=".45" stop-color="#b26ac0"/><stop offset="1" stop-color="#5a8af4"/></linearGradient>
  <radialGradient id="safari"><stop stop-color="#4fa8b8"/><stop offset=".5" stop-color="#3c9eea"/><stop offset="1" stop-color="#2e72e6"/></radialGradient>
  <linearGradient id="msg" x2="0" y2="1"><stop stop-color="#6cbcf5"/><stop offset="1" stop-color="#3d86f2"/></linearGradient>
  <linearGradient id="store" x2="0" y2="1"><stop stop-color="#54bdf8"/><stop offset="1" stop-color="#2b66e8"/></linearGradient>
  <linearGradient id="pod" x2="0" y2="1"><stop stop-color="#c472f3"/><stop offset="1" stop-color="#7d38be"/></linearGradient>
  <linearGradient id="disc" x2="1" y2="1"><stop stop-color="#7d8fd0"/><stop offset="1" stop-color="#4256ae"/></linearGradient>
  <linearGradient id="siriA" x2=".4" y2="1"><stop stop-color="#5b3fa8"/><stop offset=".3" stop-color="#c0408f"/><stop offset=".55" stop-color="#2f7fc0"/><stop offset="1" stop-color="#1c2a6a"/></linearGradient>
  <radialGradient id="s1" cx=".6" cy=".05" r=".55"><stop stop-color="#d8357f"/><stop offset=".5" stop-color="#a03590"/><stop offset="1" stop-color="#4a2a80" stop-opacity="0"/></radialGradient>
  <radialGradient id="s2" cx=".25" cy=".8" r=".5"><stop stop-color="#2a8fd0"/><stop offset="1" stop-color="#203a90" stop-opacity="0"/></radialGradient>
  <radialGradient id="s3" cx=".9" cy=".62" r=".35"><stop stop-color="#2f9f78"/><stop offset="1" stop-color="#205a80" stop-opacity="0"/></radialGradient>
  <radialGradient id="glow"><stop stop-color="#fff"/><stop offset="1" stop-color="#bff" stop-opacity="0"/></radialGradient>
  <linearGradient id="qt" x2="0" y2="1"><stop stop-color="#8a8e9a"/><stop offset=".6" stop-color="#3d3e42"/><stop offset="1" stop-color="#2f3033"/></linearGradient>
  <linearGradient id="qtb" x2="0" y2="1"><stop stop-color="#1c50e0"/><stop offset="1" stop-color="#5fd6fb"/></linearGradient>
  <linearGradient id="bin"><stop stop-color="#6d6e70"/><stop offset=".4" stop-color="#555658"/><stop offset=".8" stop-color="#77787a"/><stop offset="1" stop-color="#98999b"/></linearGradient>
  <linearGradient id="fav" y2=".7"><stop stop-color="#ea9339"/><stop offset="1" stop-color="#bf3a6c"/></linearGradient>
  <radialGradient id="cc1" cx="0" cy="0" r=".65"><stop stop-color="#ee3b9a"/><stop offset=".3" stop-color="#ea3a8e"/><stop offset="1" stop-color="#ea3a8e" stop-opacity="0"/></radialGradient>
  <radialGradient id="cc2" cx="1" cy=".65" r=".75"><stop stop-color="#f5c63c"/><stop offset="1" stop-color="#f5a63c" stop-opacity="0"/></radialGradient>
  <radialGradient id="cc3" cx="0" cy="1" r=".75"><stop stop-color="#3f8ff5"/><stop offset=".4" stop-color="#7a78ee"/><stop offset="1" stop-color="#c04ad0" stop-opacity="0"/></radialGradient>
  <radialGradient id="cc4" cx=".85" cy="1.050" r=".5"><stop stop-color="#5fd850"/><stop offset=".4" stop-color="#7fd85a"/><stop offset="1" stop-color="#c0d850" stop-opacity="0"/></radialGradient>
  <pattern id="dirt" width="24" height="24" patternUnits="userSpaceOnUse"><path fill="#7d5638" d="M0 0h24v24H0z"/><path fill="#9c7250" d="M0 0h4v4H0zM12 4h4v4h-4zM4 12h4v4H4zM20 12h4v4h-4zM12 20h4v4h-4zM8 8h4v3H8z"/><path fill="#54361f" d="M8 0h4v4H8zM20 4h4v4h-4zM0 8h4v4H0zM12 12h4v4h-4zM4 20h4v4H4zM16 16h4v4h-4z"/><path fill="#6e6a66" d="M16 8h3v4h-3z"/></pattern>
  <pattern id="grass" width="16" height="16" patternUnits="userSpaceOnUse" patternTransform="matrix(.9 .41 -.9 .41 0 0)"><path fill="#74a952" d="M0 0h16v16H0z"/><path fill="#8abf63" d="M0 0h4v4H0zM8 4h4v4H8zM4 12h4v4H4zM12 12h4v3h-4z"/><path fill="#5f9142" d="M4 4h4v4H4zM12 0h4v4h-4zM8 8h4v4H8zM0 12h4v4H0z"/></pattern>
</defs></svg>
</body>
</html>
```
FILE: styles.css
```css
* { box-sizing: border-box; }

body {
  margin: 0;
  width: 3360px;
  height: 2100px;
  overflow: hidden;
  display: flex;
  flex-direction: column;
  background: linear-gradient(90deg, #060a14, #0a1426);
  font-family: Inter, "Liberation Sans", sans-serif;
  color: #24292e;
}

svg { display: block; flex: none; }

/* ---------- menu bar ---------- */
.menubar {
  height: 45px;
  flex: none;
  display: flex;
  justify-content: space-between;
  padding: 0 9px 0 41px;
  background: linear-gradient(90deg, #1f2940, #1b2135 45%, #191c2c);
  border-bottom: 1px solid #05070c;
  color: #fff;
  font-size: 27px;
  font-weight: 500;
  line-height: 45px;
  letter-spacing: -0.3px;
  white-space: nowrap;
}
.menus { display: grid; grid-template-columns: 68px 118px 82px 86px 100px 129px 180px 140px 80px; }
.menus b { font-weight: 700; letter-spacing: 0.1px; }
.apple { margin: 5px 0 0 -1px; }
.tray {
  display: grid;
  width: 1269px;
  grid-template-columns: 51px 53px 63px 63px 55px 63px 48px 62px 62px 70px 79px 211px 196px 64px 55px 37px;
}
.tray span { letter-spacing: 0.05px; }
.tray .clock { letter-spacing: 0; }
.tray .pct { font-size: 23px; letter-spacing: -0.3px; line-height: 44px; }

/* ---------- window ---------- */
.window {
  height: 1921px;
  flex: none;
  display: flex;
  flex-direction: column;
  background: #fff;
  border-radius: 12px;
  overflow: hidden;
}
.toolbar {
  height: 77px;
  flex: none;
  display: flex;
  align-items: center;
  padding: 0 16px 0 26px;
  border-top: 2px solid #9a9c9e;
  border-bottom: 2px solid #85878a;
  background: linear-gradient(#717375, #646568);
}
.lights { display: flex; gap: 16px; width: 130px; }
.lights i { width: 24px; height: 24px; border-radius: 50%; }
.red { background: #ed655a; }
.yellow { background: #e0c04c; }
.green { background: #72be47; }
.btn {
  width: 74px;
  height: 44px;
  margin-left: 16px;
  border-radius: 7px;
  background: linear-gradient(#9a9b9f, #929397);
  border-top: 1px solid #abacaf;
}
.btn svg { margin-top: -1px; }
.btn.nav { width: 50px; margin-left: 2px; }
.btn.nav.back { margin-left: 0; }
.btn.side { margin-left: 20px; }
.btn.shield { margin-left: 557px; }
.btn.download { margin-left: 729px; }
.url {
  position: relative;
  width: 1362px;
  height: 44px;
  margin-left: 16px;
  display: flex;
  align-items: center;
  justify-content: center;
  gap: 10px;
  padding-right: 2px;
  border-radius: 7px;
  background: #8f9092;
  border-top: 1px solid #a5a6a8;
  color: #fff;
  font-size: 24px;
  font-weight: 500;
  letter-spacing: -0.38px;
}
.url > svg:first-child { margin-top: -1px; }
.url span { margin-top: 2px; }
.reload { position: absolute; right: 12px; top: 6px; }

.favorites {
  height: 50px;
  flex: none;
  display: grid;
  grid-template-columns: 465px 91px 99px 96px 329px 78.5px 106.5px 133px 133px 103px 118px 257px 76px 149px 305px 300px;
  align-items: center;
  padding-left: 30px;
  border-bottom: 2px solid #77787a;
  background: linear-gradient(#67696c, #5d5e61);
  color: #dcdcde;
  font-size: 22px;
  letter-spacing: -0.02px;
  white-space: nowrap;
}

.tabs {
  height: 50px;
  flex: none;
  display: flex;
  background: linear-gradient(#353637, #303132);
  border-bottom: 2px solid #0c0c0c;
}
.pin {
  width: 72px;
  height: 48px;
  display: flex;
  align-items: center;
  justify-content: center;
  border-right: 2px solid #7c7d7e;
}
.pin.active { background: #5e5f62; }
.letter {
  width: 32px;
  height: 32px;
  border-radius: 7px;
  background: #9091a0;
  color: #fff;
  font-size: 22px;
  font-weight: 700;
  line-height: 32px;
  text-align: center;
}
.letter.w { background: #3e5cea; border-radius: 4px; font-style: italic; font-weight: 800; }
.tab {
  flex: 1;
  display: flex;
  align-items: center;
  justify-content: center;
  gap: 10px;
  padding-left: 2px;
  color: #a9aaab;
  font-size: 22px;
}
.newtab { width: 50px; border-left: 2px solid #7c7d7e; background: #414243; }

/* ---------- page ---------- */
.page { flex: 1; padding: 0 464px; overflow: hidden; }
.box { width: 2432px; border: 2px solid #e1e4e8; border-radius: 12px; }
.contributors {
  height: 76px;
  margin-top: -12px;
  margin-bottom: 32px;
  padding: 5px 32px;
  display: flex;
  align-items: flex-start;
  font-size: 28px;
  line-height: 24px;
  letter-spacing: -0.1px;
}
.contributors b { font-weight: 600; margin: 5px 7px 0 8px; }
.contributors span { margin-top: 5px; }
.file { height: 1569px; overflow: hidden; }
.filehead {
  height: 90px;
  display: flex;
  align-items: center;
  padding: 0 42px 0 32px;
  background: #f6f8fa;
  border-bottom: 2px solid #e1e4e8;
}
.mono { font: 24px/36px "DejaVu Sans Mono", monospace; letter-spacing: -0.08px; margin-top: -3px; }
.rule { width: 2px; height: 36px; margin: 0 19px 0 23px; background: #dfe1e4; }
.group {
  display: flex;
  margin: -2px 0 0 auto;
  height: 56px;
  border: 2px solid #dadcdf;
  border-radius: 12px;
  background: #fafbfc;
  box-shadow: 0 2px 0 rgba(27, 31, 35, .04);
  font-size: 24px;
  font-weight: 500;
  line-height: 53px;
  text-align: center;
}
.raw { width: 98px; border-right: 2px solid #dadcdf; }
.blame { width: 121px; }
.acts { display: flex; gap: 38px; margin: -4px 0 0 18px; }
.acts svg { fill: #586069; }

.markdown { width: 2024px; margin: 0 auto; padding-top: 80px; font-size: 31px; line-height: 48px; letter-spacing: -0.18px; }
.markdown h1, .markdown h2 { margin: 48px 0 32px; border-bottom: 2px solid #eaecef; font-weight: 600; }
.markdown h1 { margin: 0 0 48px; padding-top: 1px; height: 101.2px; font-size: 62px; line-height: 80px; letter-spacing: -1.04px; }
.markdown h2 { height: 76.4px; font-size: 46px; line-height: 60px; letter-spacing: -0.5px; }
.markdown h2.long { letter-spacing: -0.75px; }
.markdown p { margin: 0 0 32px; }
.markdown ul { margin: 0 0 32px; padding-left: 64px; list-style: none; }
.markdown li { display: flex; align-items: center; }
.markdown li::before {
  content: "";
  width: 12px;
  height: 12px;
  margin: 2px 23px 0 -35px;
  border-radius: 50%;
  background: #24292e;
}
.markdown li + li { margin-top: 8px; }
.markdown a { color: #1a5fcb; }

/* ---------- dock ---------- */
.dock {
  position: relative;
  width: 3179px;
  height: 136px;
  flex: none;
  margin: -1px 0 0 91px;
  padding: 11px 0 0 5px;
  display: flex;
  border: 2px solid #41464f;
  border-bottom: 0;
  border-radius: 10px 10px 0 0;
  background: linear-gradient(#141921, #181d2c);
  box-shadow: 0 0 70px rgba(0, 0, 0, .17);
}
.app { position: relative; width: 109.55px; flex: none; }
.app svg { width: 102px; height: 102px; margin: 0 auto; overflow: visible; }
.app.run::after {
  content: "";
  position: absolute;
  left: 50px;
  top: 110px;
  width: 8px;
  height: 8px;
  border-radius: 50%;
  background: #9a9eaa;
}
.app em {
  position: absolute;
  left: 70px;
  top: -2px;
  width: 39px;
  height: 39px;
  border-radius: 50%;
  background: #dd4a3e;
  color: #fff;
  font-size: 22px;
  font-style: normal;
  line-height: 39px;
  text-align: center;
}
.petals rect { mix-blend-mode: multiply; }
.petals { isolation: isolate; }
.sep { width: 2px; height: 98px; margin: 6px 23px; flex: none; background: #4c515c; }
.sep.two { margin: 6px 23px; }
.defs { position: absolute; }
```
